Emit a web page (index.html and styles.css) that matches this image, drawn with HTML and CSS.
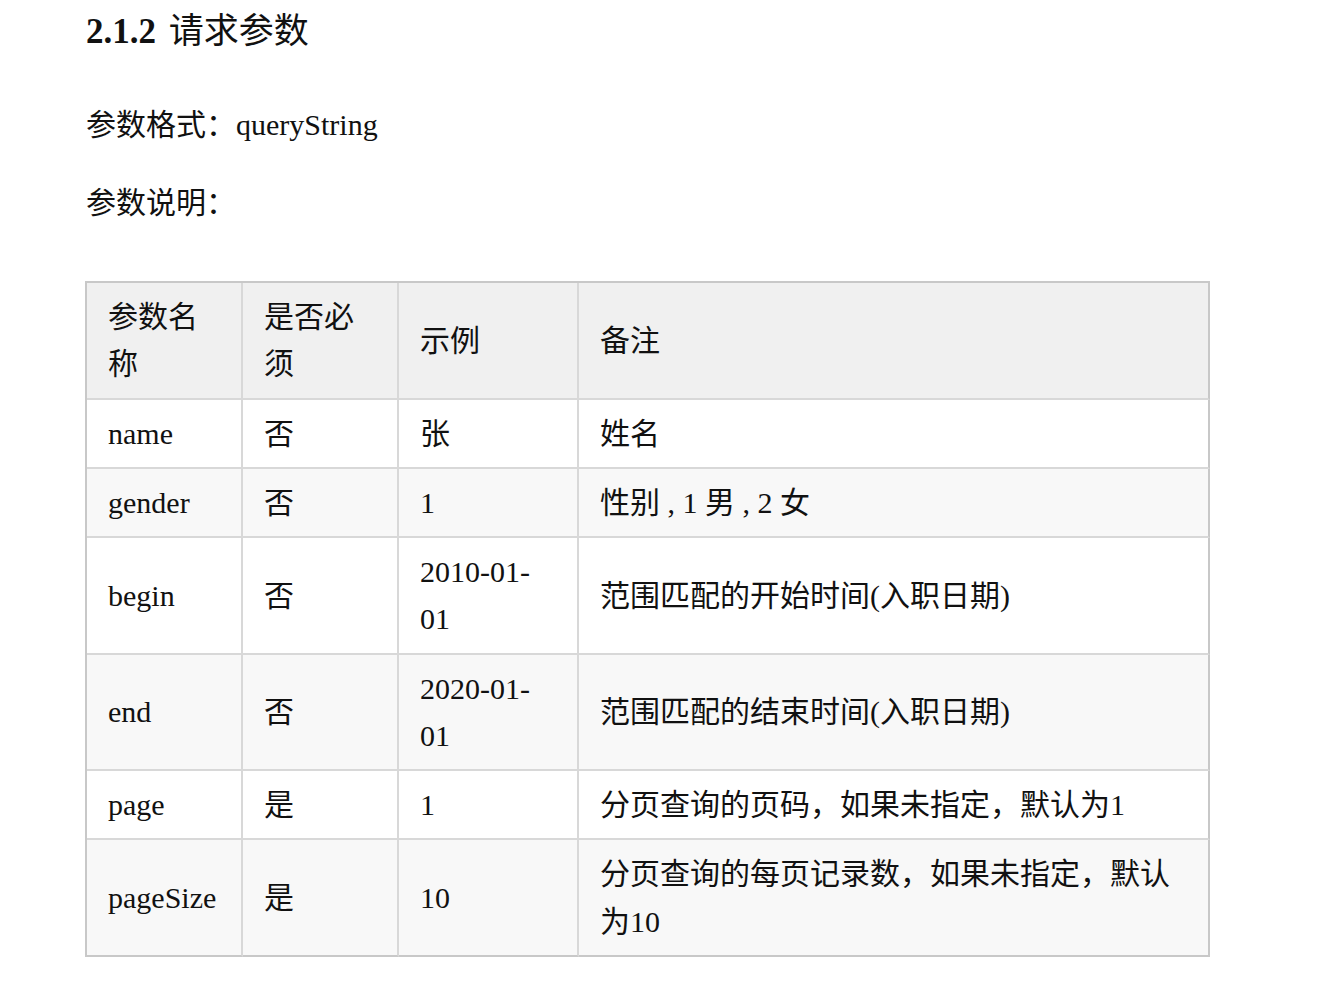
FILE: index.html
```html
<!DOCTYPE html>
<html lang="zh-CN">
<head>
<meta charset="utf-8">
<title>2.1.2 请求参数</title>
<link rel="stylesheet" href="styles.css">
</head>
<body>
<div class="doc">
  <h3 class="title"><span class="num">2.1.2</span> 请求参数</h3>
  <p class="para first">参数格式：queryString</p>
  <p class="para second">参数说明：</p>
  <table class="params">
    <thead>
      <tr>
        <th class="c1">参数名称</th>
        <th class="c2">是否必须</th>
        <th class="c3">示例</th>
        <th class="c4">备注</th>
      </tr>
    </thead>
    <tbody>
      <tr><td>name</td><td>否</td><td>张</td><td>姓名</td></tr>
      <tr><td>gender</td><td>否</td><td>1</td><td>性别 , 1 男 , 2 女</td></tr>
      <tr><td>begin</td><td>否</td><td>2010-01-<wbr>01</td><td>范围匹配的开始时间(入职日期)</td></tr>
      <tr><td>end</td><td>否</td><td>2020-01-<wbr>01</td><td>范围匹配的结束时间(入职日期)</td></tr>
      <tr><td>page</td><td>是</td><td>1</td><td>分页查询的页码，如果未指定，默认为1</td></tr>
      <tr><td>pageSize</td><td>是</td><td>10</td><td>分页查询的每页记录数，如果未指定，默认为10</td></tr>
    </tbody>
  </table>
</div>
</body>
</html>
```
FILE: styles.css
```css
html, body {
  margin: 0;
  padding: 0;
  background: #ffffff;
}

body {
  font-family: "Liberation Serif", "Noto Sans CJK SC", serif;
  font-size: 30px;
  line-height: 47px;
  color: #111111;
}

.doc {
  padding: 8px 0 40px 86px;
}

.title {
  margin: 0;
  font-size: 35px;
  line-height: 48px;
  font-weight: normal;
}

.title .num {
  font-weight: bold;
  margin-right: 4px;
}

.para {
  margin: 0;
}

.para.first {
  margin-top: 45px;
}

.para.second {
  margin-top: 31px;
}

.params {
  margin-top: 55px;
  margin-left: -1px;
  border-collapse: separate;
  border-spacing: 0;
  table-layout: fixed;
  width: 1125px;
  border-top: 2px solid #c8c8c8;
  border-left: 2px solid #c8c8c8;
  line-height: 47.25px;
}

.params th,
.params td {
  box-sizing: border-box;
  padding: 10px 20px 10px 21px;
  border-right: 2px solid #d8d8d8;
  border-bottom: 2px solid #d8d8d8;
  text-align: left;
  vertical-align: middle;
  font-weight: normal;
}

.params th:last-child,
.params td:last-child {
  border-right-color: #c8c8c8;
}

.params tbody tr:last-child td {
  border-bottom-color: #c8c8c8;
}

.params .c1 { width: 156px; }
.params .c2 { width: 156px; }
.params .c3 { width: 180px; }
.params .c4 { width: 631px; }

.params thead tr {
  background: #f0f0f0;
}

.params tbody tr:nth-child(even) {
  background: #f8f8f8;
}

.params tbody tr:nth-child(odd) {
  background: #ffffff;
}
```
